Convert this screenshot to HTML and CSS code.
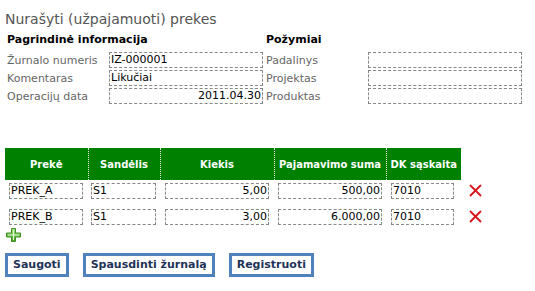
FILE: index.html
```html
<!DOCTYPE html>
<html>
<head>
<meta charset="utf-8">
<link rel="stylesheet" href="styles.css">
</head>
<body>
<div class="page">
  <h1 class="title">Nurašyti (užpajamuoti) prekes</h1>
  <div class="info">
    <div class="col">
      <div class="sec">Pagrindinė informacija</div>
      <div class="row"><span class="lbl">Žurnalo numeris</span><span class="inp">IZ-000001</span></div>
      <div class="row"><span class="lbl">Komentaras</span><span class="inp">Likučiai</span></div>
      <div class="row"><span class="lbl">Operacijų data</span><span class="inp num">2011.04.30</span></div>
    </div>
    <div class="col col-r">
      <div class="sec">Požymiai</div>
      <div class="row"><span class="lbl">Padalinys</span><span class="inp"></span></div>
      <div class="row"><span class="lbl">Projektas</span><span class="inp"></span></div>
      <div class="row"><span class="lbl">Produktas</span><span class="inp"></span></div>
    </div>
  </div>

  <table class="grid">
    <thead>
      <tr>
        <th class="c1">Prekė</th>
        <th class="c2">Sandėlis</th>
        <th class="c3">Kiekis</th>
        <th class="c4">Pajamavimo suma</th>
        <th class="c5">DK sąskaita</th>
        <th class="c6"></th>
      </tr>
    </thead>
    <tbody>
      <tr>
        <td><span class="cell w1">PREK_A</span></td>
        <td><span class="cell w2">S1</span></td>
        <td><span class="cell w3 num">5,00</span></td>
        <td><span class="cell w4 num">500,00</span></td>
        <td><span class="cell w5">7010</span></td>
        <td class="del"><svg width="13" height="13" viewBox="0 0 13 13"><path d="M1.5 1.5 L11.5 11.5 M11.5 1.5 L1.5 11.5" stroke="#d8141a" stroke-width="1.8" stroke-linecap="round"/></svg></td>
      </tr>
      <tr>
        <td><span class="cell w1">PREK_B</span></td>
        <td><span class="cell w2">S1</span></td>
        <td><span class="cell w3 num">3,00</span></td>
        <td><span class="cell w4 num">6.000,00</span></td>
        <td><span class="cell w5">7010</span></td>
        <td class="del"><svg width="13" height="13" viewBox="0 0 13 13"><path d="M1.5 1.5 L11.5 11.5 M11.5 1.5 L1.5 11.5" stroke="#d8141a" stroke-width="1.8" stroke-linecap="round"/></svg></td>
      </tr>
    </tbody>
  </table>

  <div class="add">
    <svg width="15" height="14" viewBox="0 0 15 14">
      <defs>
        <linearGradient id="g" x1="0" y1="0" x2="0" y2="1">
          <stop offset="0" stop-color="#a6e486"/>
          <stop offset="1" stop-color="#46a322"/>
        </linearGradient>
      </defs>
      <path d="M5.5 0.5 H9.5 V5 H14.5 V9 H9.5 V13.5 H5.5 V9 H0.5 V5 H5.5 Z" fill="url(#g)" stroke="#3f8f22" stroke-width="1"/>
      <path d="M7.5 2 V12 M2 7 H13" stroke="#dff7cf" stroke-width="1"/>
    </svg>
  </div>

  <div class="buttons">
    <span class="btn">Saugoti</span>
    <span class="btn">Spausdinti žurnalą</span>
    <span class="btn">Registruoti</span>
  </div>
</div>
</body>
</html>
```

FILE: styles.css
```css
* { box-sizing: border-box; }
html, body { margin: 0; padding: 0; background: #fff; }
body {
  font-family: "DejaVu Sans", Verdana, sans-serif;
  font-size: 11px;
  color: #000;
}
.page { padding: 9px 5px 0 5px; width: 535px; }
.title {
  margin: 0;
  font-size: 14px;
  font-weight: normal;
  color: #555;
  line-height: 20px;
}
.info {
  display: flex;
  margin-top: 4px;
}
.col { display: flex; flex-direction: column; width: 259px; padding-left: 2px; }
.col-r { width: 260px; padding-left: 2px; }
.sec {
  font-weight: bold;
  line-height: 14px;
  height: 18px;
  color: #000;
}
.row {
  display: flex;
  align-items: center;
  height: 18px;
}
.lbl { width: 102px; color: #666; }
.inp {
  width: 154px;
  height: 16px;
  border: 1px dashed #888;
  line-height: 14px;
  padding: 0 1px;
  white-space: nowrap;
}
.num { text-align: right; }
.grid {
  border-collapse: collapse;
  margin-top: 43px;
}
.grid th {
  background: #008000;
  color: #fff;
  font-weight: bold;
  font-size: 10px;
  height: 32px;
  padding: 0;
  text-align: center;
  white-space: nowrap;
  border-left: 1px dotted #e8f5e8;
}
.grid th.c1 { border-left: none; width: 83px; }
.grid th.c2 { width: 72px; }
.grid th.c3 { width: 114px; }
.grid th.c4 { width: 112px; }
.grid th.c5 { width: 75px; }
.grid th.c6 { background: #fff; border-left: none; width: 30px; }
.grid td {
  padding: 3px 0 0 0;
  height: 26px;
  vertical-align: top;
}
.cell {
  display: block;
  height: 16px;
  border: 1px dashed #888;
  line-height: 14px;
  padding: 0 1px;
  white-space: nowrap;
}
.w1 { width: 74px; margin-left: 4px; }
.w2 { width: 65px; margin-left: 3px; }
.w3 { width: 104px; margin-left: 5px; }
.w4 { width: 104px; margin-left: 4px; }
.w5 { width: 63px; margin-left: 5px; }
.del { padding-top: 4px !important; padding-left: 8px !important; }
.del svg { display: block; }
.add { height: 25px; margin-top: -4px; padding-left: 1px; }
.add svg { display: block; }
.buttons { display: flex; gap: 14px; }
.btn {
  display: block;
  border: 3px solid #4f81bd;
  padding: 0 5px;
  height: 24px;
  line-height: 18px;
  font-weight: bold;
  color: #1f3358;
  font-size: 11px;
}
```
